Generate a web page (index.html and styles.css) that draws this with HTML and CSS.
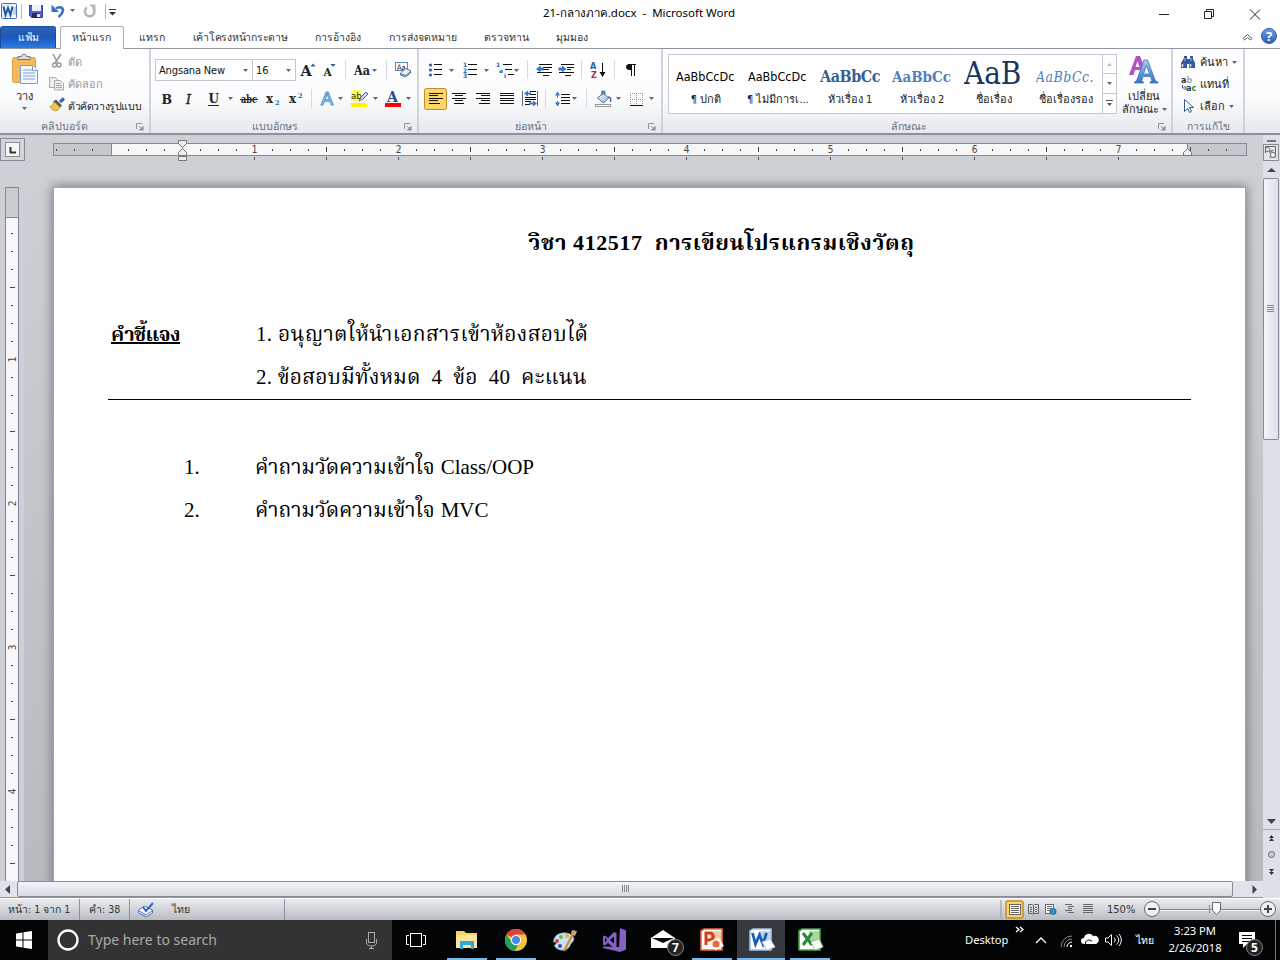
FILE: index.html
```html
<!DOCTYPE html>
<html lang="th">
<head>
<meta charset="utf-8">
<title>21-กลางภาค.docx - Microsoft Word</title>
<link rel="stylesheet" href="styles.css">
</head>
<body>
<svg class="defs" width="0" height="0">
  <defs>
    <linearGradient id="blueA" x1="0" y1="0" x2="0" y2="1"><stop offset="0" stop-color="#a9cdf5"/><stop offset="1" stop-color="#2f6dc6"/></linearGradient>
    <linearGradient id="steel" x1="0" y1="0" x2="1" y2="1"><stop offset="0" stop-color="#fff"/><stop offset="1" stop-color="#8fb0d8"/></linearGradient>
    <linearGradient id="help" x1="0" y1="0" x2="0" y2="1"><stop offset="0" stop-color="#6ea0e6"/><stop offset="1" stop-color="#2a5fb9"/></linearGradient>
    <symbol id="down" viewBox="0 0 5 3"><path d="M0 0h5L2.500 3z" fill="#666" stroke="none"/></symbol>
    <symbol id="launch" viewBox="0 0 8 8"><path d="M.5 6V.5H6M3 3l3 3" fill="none" stroke="#8a9099"/><path d="M7.500 2.500v5h-5z" fill="#8a9099"/></symbol>
  </defs>
</svg>

<header class="titlebar">
  <svg width="120" height="25" viewBox="0 0 120 25">
    <rect x="1.500" y="3.500" width="15" height="15" rx="1" fill="#e4effb" stroke="#3b74b8"/>
    <path d="M12 5h4v13h-4z" fill="#fff"/><path d="M13 8h3M13 10h3M13 12h3M13 14h3" stroke="#7ca8d8"/>
    <path d="M3.500 6.500l2 8.500 2.500-7 2.500 7 2-8.500" fill="none" stroke="#1c59a8" stroke-width="2"/>
    <path d="M21.500 4v15M105.500 4v15" stroke="#b4b8bd"/>
    <path d="M29.500 5.500h13v12h-11l-2-2z" fill="#5660d0" stroke="#333ea0"/><rect x="32" y="5" width="9" height="6" fill="#eaf0ff"/><rect x="32" y="13" width="8" height="5" fill="#222c60"/><rect x="37" y="14" width="3" height="3" fill="#dfe6fa"/>
    <path d="M56 8.500c5-3 8 0 6.500 3.500-.8 2-2 3.500-4 5" fill="none" stroke="#3f6fc4" stroke-width="2.600"/><path d="M51.500 4.500v7.500h7.500z" fill="#3f6fc4"/>
    <use href="#down" x="70" y="9" width="5" height="3"/>
    <path d="M87 7.500a4.800 4.800 0 1 0 6 .5" fill="none" stroke="#b5b5b5" stroke-width="2.600"/><path d="M89 4.500h6.500v6z" fill="#b9b9b9"/>
    <path d="M109 9.500h7" stroke="#333"/><path d="M109 12h7l-3.500 3.500z" fill="#333"/>
  </svg>
  <div class="doc-title">21-กลางภาค.docx&nbsp; -&nbsp; Microsoft Word</div>
  <svg width="130" height="25" viewBox="1150 0 130 25" fill="none" stroke="#222">
    <path d="M1159 14.500h10M1204.500 11.500h7v7h-7zM1206.500 11v-1.500h7v7h-2M1250 9.500l10 10M1260 9.500l-10 10"/>
  </svg>
</header>

<nav class="tabs">
  <div class="tab file">แฟ้ม</div>
  <div class="tab active">หน้าแรก</div>
  <div class="tab t-insert">แทรก</div>
  <div class="tab t-layout">เค้าโครงหน้ากระดาษ</div>
  <div class="tab t-ref">การอ้างอิง</div>
  <div class="tab t-mail">การส่งจดหมาย</div>
  <div class="tab t-review">ตรวจทาน</div>
  <div class="tab t-view">มุมมอง</div>
  <svg class="tab-end" width="45" height="23" viewBox="1235 25 45 23">
    <path d="M1243 38.500l4.500-4 4.500 4-1.500 1.500-3-2.500-3 2.500z" fill="#fff" stroke="#555"/>
    <circle cx="1269" cy="36" r="7.500" fill="url(#help)" stroke="#2a5bae"/>
    <text x="1269" y="41" class="help-mark">?</text>
  </svg>
</nav>

<section class="ribbon">
  <div class="group g-clip">
    <div class="g-body">
      <div class="paste">
        <svg width="48" height="39" viewBox="0 50 48 39">
          <rect x="12.500" y="57.500" width="23" height="25" rx="2" fill="#f0b95c" stroke="#d9a04a"/>
          <path d="M18 59.500v-3h3.500c0-3 5-3 5 0H30v3z" fill="#d8d8d8" stroke="#777"/>
          <path d="M20.500 65.500h12l5 5v13h-17z" fill="#f4f8ff" stroke="#7c9cc8"/><path d="M23 70h9M23 73h12M23 76h12M23 79h12" stroke="#7f9fce"/><path d="M32.500 65.500v5h5" fill="#fff" stroke="#7c9cc8"/>
        </svg>
        <span>วาง</span>
        <svg class="paste-ar" width="5" height="3"><use href="#down"/></svg>
      </div>
      <div class="clip-list">
        <div class="off"><svg width="18" height="18" viewBox="48 54 18 18"><path d="M53 55l4.500 8.500M61 55l-6 9" stroke="#9a9a9a" stroke-width="1.600"/><g fill="none" stroke="#999" stroke-width="1.400"><circle cx="54.500" cy="66" r="2"/><circle cx="59" cy="66" r="2"/></g></svg><span>ตัด</span></div>
        <div class="off"><svg width="18" height="18" viewBox="48 75 18 18" fill="#eee" stroke="#aaa"><path d="M49.500 77.500h6l2 2v8h-8z"/><path d="M54.500 80.500h6l3 3v6.500h-9zM56 83.500h5M56 85.500h6M56 87.500h6"/></svg><span>คัดลอก</span></div>
        <div><svg width="18" height="18" viewBox="48 97 18 18"><path d="M60 102l4-3.500" stroke="#3a5fa8" stroke-width="3"/><path d="M56 99.500l6 6-2 2-7-6z" fill="#555a60"/><path d="M54 101.500l6 6c-2 4-6 5-10-1 2 0 3-2 4-5z" fill="#f3c64b" stroke="#a07a1d" stroke-width=".7"/></svg><span class="w-brush">ตัวคัดวางรูปแบบ</span></div>
      </div>
    </div>
    <div class="g-cap">คลิปบอร์ด<svg class="lch" width="8" height="8"><use href="#launch"/></svg></div>
  </div>

  <div class="group g-font">
    <div class="row r1">
      <div class="combo c-name"><span>Angsana New</span><svg width="5" height="3"><use href="#down"/></svg></div>
      <div class="combo c-size"><span>16</span><svg width="5" height="3"><use href="#down"/></svg></div>
      <svg width="120" height="22" viewBox="296 59 120 22" class="ico-serif">
        <text x="300.500" y="76" font-size="14.500">A</text><path d="M310.500 66.500l2.500-3 2.500 3z" fill="#2e5f9e"/>
        <text x="323.500" y="76" font-size="10.500">A</text><path d="M330.500 64h5l-2.500 3z" fill="#2e5f9e"/>
        <path d="M345.500 60v19M386.500 60v19" stroke="#d5d8dc"/>
        <text x="354" y="75" font-size="12.500" textLength="16" lengthAdjust="spacingAndGlyphs">Aa</text><use href="#down" x="372" y="69" width="5" height="3"/>
        <rect x="395.500" y="62.500" width="12" height="8" fill="#fff" stroke="#5d86b6"/><text x="397" y="70" font-size="7.500" class="sans">Aa</text>
        <path d="M400.500 73l5-4.500 5 2v2.500l-5 4-5-2z" fill="#e8f0fb" stroke="#4a6f9f"/><path d="M401 74l5 1.500 4.500-4" fill="none" stroke="#4a6f9f"/>
      </svg>
    </div>
    <div class="row r2">
      <svg width="262" height="22" viewBox="154 88 262 22" class="ico-serif">
        <text x="161.500" y="103.500" font-size="12.500">B</text><text x="186" y="103.500" font-size="12.500" class="it">I</text><text x="208.500" y="102.500" font-size="12">U</text><path d="M208 105.500h11" stroke="#222"/>
        <use href="#down" x="228" y="97" width="5" height="3"/>
        <text x="241" y="103" font-size="10.500" textLength="16" lengthAdjust="spacingAndGlyphs">abc</text><path d="M240 99.500h18" stroke="#222"/>
        <text x="266" y="103" font-size="12">x</text><text x="275" y="105" font-size="6.500" class="blue">2</text>
        <text x="289" y="103" font-size="12">x</text><text x="298" y="98" font-size="6.500" class="blue">2</text>
        <path d="M311.500 89v19" stroke="#d5d8dc"/>
        <text x="321" y="105" font-size="18" class="glow">A</text><use href="#down" x="338" y="97" width="5" height="3"/>
        <path d="M351 90h10v11h-10z" fill="#ff6"/><text x="351" y="98.500" font-size="9.500" class="sans">ab</text><path d="M359 101l2-4 5-5 2 2-5 5z" fill="#c6d6ee" stroke="#4d6a96"/><path d="M351 103h16v4h-16z" fill="#fff200"/>
        <use href="#down" x="373" y="97" width="5" height="3"/>
        <text x="387" y="102" font-size="14" class="darkblue">A</text><path d="M385 103h16v4h-16z" fill="#f00"/>
        <use href="#down" x="406" y="97" width="5" height="3"/>
      </svg>
    </div>
    <div class="g-cap">แบบอักษร<svg class="lch" width="8" height="8"><use href="#launch"/></svg></div>
  </div>

  <div class="group g-para">
    <div class="row r1">
      <svg width="236" height="22" viewBox="422 59 236 22" fill="none" stroke="#111">
        <g fill="#2e5fa8" stroke="none"><circle cx="430.500" cy="65" r="1.600"/><circle cx="430.500" cy="70" r="1.600"/><circle cx="430.500" cy="75" r="1.600"/></g>
        <path d="M434 64.500h8M434 69.500h8M434 74.500h8M468 64.500h9M468 69.500h9M468 74.500h9M503 64.500h9M505 69.500h7M508 74.500h6"/>
        <g class="tiny"><text x="463" y="67">1</text><text x="463" y="72.500">2</text><text x="463" y="78">3</text><text x="496" y="67">1</text><text x="499" y="73">a</text><text x="504" y="78">i</text></g>
        <use href="#down" x="449" y="69" width="5" height="3"/><use href="#down" x="484" y="69" width="5" height="3"/><use href="#down" x="514" y="69" width="5" height="3"/>
        <path d="M527.500 60v19M581.500 60v19M614.500 60v19" stroke="#d5d8dc"/>
        <path d="M539 64.500h13M543 67.500h9M543 69.500h6M537 72.500h15M543 75.500h6M561 64.500h13M567 67.500h7M567 69.500h4M559 72.500h15M565 75.500h6"/>
        <path d="M536 69l4.500-3.500v2h3v3h-3v2zM566.500 69l-4.500-3.500v2h-3.500v3h3.500v2z" fill="#3d73c8" stroke="none"/>
        <text x="590" y="69" class="sortA">A</text><text x="591" y="77.500" class="sortZ">Z</text><path d="M602.500 63v11"/><path d="M599.500 72h6l-3 5z" fill="#111" stroke="none"/>
        <path d="M631.500 64v12M634.500 64v12M629 64.500h7"/><path d="M631 64.500h-2a2.500 2.500 0 0 0 0 5h2z" fill="#111"/>
      </svg>
    </div>
    <div class="row r2">
      <svg width="236" height="24" viewBox="422 87 236 24" fill="none" stroke="#111">
        <rect x="424.500" y="88.500" width="22" height="21" rx="2" fill="#fbd668" stroke="#c28a30"/>
        <path d="M429 93.500h14M429 95.500h9M429 98.500h14M429 100.500h9M429 103.500h11M452 93.500h14M455 95.500h8M452 98.500h14M455 100.500h8M454 103.500h10M476 93.500h14M481 95.500h9M476 98.500h14M481 100.500h9M479 103.500h11M500 93.500h14M500 95.500h14M500 98.500h14M500 100.500h14M500 103.500h14"/>
        <path d="M522.500 91v15M537.500 91v15" stroke="#668"/><path d="M530 91.500h6M530 94.500h6M525 97.500h11M525 99.500h11M525 101.500h6M525 104.500h5"/><path d="M524 93.500l4-3v2h3v2h-3v2zM537 103.500l-4-3v2h-4v2h4v2z" fill="#3d73c8" stroke="none"/>
        <path d="M545.500 89v19M586.500 89v19" stroke="#d5d8dc"/>
        <path d="M561 94.500h9M561 97.500h9M561 100.500h9M561 103.500h9"/><path d="M557.500 94v12" stroke="#3d73c8" stroke-dasharray="4 3"/><path d="M555 95.500l2.500-4 2.500 4zM555 102.500l2.500 4 2.500-4z" fill="#3d73c8" stroke="none"/>
        <use href="#down" x="572" y="97" width="5" height="3"/>
        <path d="M597.500 98l6-5 5 5-5 5z" fill="url(#steel)" stroke="#4b6a96"/><path d="M602 95v-3.500h2.500V95M608 97c3 0 3 2 2.500 5" stroke="#4b6a96" stroke-width="1.500"/><rect x="595.500" y="104.500" width="15" height="2" fill="#fff" stroke="#999"/>
        <use href="#down" x="616" y="97" width="5" height="3"/>
        <path d="M630.500 93v12M642.500 93v12M636.500 93v12M630 93.500h13M630 99.500h13" stroke="#999" stroke-dasharray="1 1"/><path d="M630 105.500h13"/>
        <use href="#down" x="649" y="97" width="5" height="3"/>
      </svg>
    </div>
    <div class="g-cap">ย่อหน้า<svg class="lch" width="8" height="8"><use href="#launch"/></svg></div>
  </div>

  <div class="group g-style">
    <div class="g-body">
      <div class="gallery">
        <div class="style"><b class="s-norm">AaBbCcDc</b><span>¶ ปกติ</span></div>
        <div class="style"><b class="s-norm">AaBbCcDc</b><span>¶ ไม่มีการเ...</span></div>
        <div class="style"><b class="s-h1">AaBbCc</b><span>หัวเรื่อง 1</span></div>
        <div class="style"><b class="s-h2">AaBbCc</b><span>หัวเรื่อง 2</span></div>
        <div class="style"><b class="s-title">AaB</b><span>ชื่อเรื่อง</span></div>
        <div class="style"><b class="s-sub">AaBbCc.</b><span>ชื่อเรื่องรอง</span></div>
        <div class="gal-nav">
          <div><svg width="5" height="3" viewBox="0 0 5 3"><path d="M0 3h5L2.500 0z" fill="#bbb"/></svg></div>
          <div><svg width="5" height="3"><use href="#down"/></svg></div>
          <div><svg width="7" height="7"><path d="M0 .5h7" stroke="#555"/><path d="M1 3h5L3.500 6z" fill="#555"/></svg></div>
        </div>
      </div>
      <div class="change">
        <svg width="36" height="32" viewBox="1126 53 36 32">
          <path d="M1129 75l7-19h4l5 13-3 5-2-4h-5l-1.500 5zM1135.500 67h4l-2-6z" fill="#b052c0" fill-rule="evenodd"/>
          <path d="M1134.500 83v-1l2-1 7.500-21h3.500l8 21 2.500 1v1h-8v-1l2-1-1.500-4.500h-7.500l-1.500 4.500 2 1v1zM1143.500 74h6l-3-8.500z" fill="url(#blueA)" stroke="#3b74c4" stroke-width=".8" fill-rule="evenodd"/>
        </svg>
        <span>เปลี่ยน</span>
        <span>ลักษณะ <svg width="5" height="3"><use href="#down"/></svg></span>
      </div>
    </div>
    <div class="g-cap">ลักษณะ<svg class="lch" width="8" height="8"><use href="#launch"/></svg></div>
  </div>

  <div class="group g-edit">
    <div class="edit-list">
      <div><svg width="20" height="18" viewBox="1180 53 20 18"><path d="M1184 56h3v3h3v-3h3v3l2 4v5h-6v-4h-2v4h-6v-5l3-5z" fill="#33599a"/><path d="M1182.500 64v3M1190.500 64v3" stroke="#cfe0ff" stroke-width="1.500"/><path d="M1185 58v3M1191 58v3" stroke="#9db8e6"/></svg><span>ค้นหา</span><svg class="ar" width="5" height="3"><use href="#down"/></svg></div>
      <div><svg width="20" height="18" viewBox="1180 75 20 18"><text x="1181" y="83" class="rep">a<tspan class="pale">b</tspan></text><text x="1186" y="91" class="rep">a<tspan class="green">c</tspan></text><path d="M1182.500 85v3h3M1184.500 86l2 2-2 2" fill="none" stroke="#3660a8"/></svg><span>แทนที่</span></div>
      <div><svg width="20" height="18" viewBox="1180 97 20 18"><path d="M1184.500 99.500v12l3-3 2 4 2-1-2-4h4z" fill="#fff" stroke="#33599a"/></svg><span>เลือก</span><svg class="ar" width="5" height="3"><use href="#down"/></svg></div>
    </div>
    <div class="g-cap">การแก้ไข</div>
  </div>
</section>

<main class="workspace">
  <div class="hruler">
    <svg width="1262" height="31" viewBox="0 135 1262 31">
      <defs><pattern id="ht" x="111" y="143" width="144" height="13" patternUnits="userSpaceOnUse"><path d="M17 6h1v2h-1zM35 6h1v2h-1zM53 6h1v2h-1zM71 4h1v5h-1zM89 6h1v2h-1zM107 6h1v2h-1zM125 6h1v2h-1z" fill="#444"/></pattern>
      <pattern id="hb" x="110" y="157" width="72" height="3" patternUnits="userSpaceOnUse"><path d="M0 0h1v3h-1z" fill="#555"/></pattern></defs>
      <rect x=".5" y="138.500" width="24" height="22" fill="#d2d6db" stroke="#858b95"/><rect x="5.500" y="142.500" width="14" height="14" fill="#f7f7f7" stroke="#858b95"/><path d="M10.500 147v6M10 152.500h6" stroke="#333" stroke-width="2"/>
      <rect x="53.500" y="143.500" width="1193" height="12" fill="#c5c9ce" stroke="#858b95"/>
      <rect x="111.500" y="143.500" width="1076" height="12" fill="#f7f7f7" stroke="#858b95"/>
      <rect x="54" y="143" width="1180" height="13" fill="url(#ht)"/><rect x="182" y="157" width="1000" height="3" fill="url(#hb)"/>
      <g class="rnum"><text x="254.500" y="153">1</text><text x="398.500" y="153">2</text><text x="542.500" y="153">3</text><text x="686.500" y="153">4</text><text x="830.500" y="153">5</text><text x="974.500" y="153">6</text><text x="1118.500" y="153">7</text></g>
      <g fill="#eee" stroke="#777"><path d="M178.500 140.500h8v3l-4 4-4-4zM178.500 155.500v-3l4-4 4 4v3zM178.500 156.500h8v4h-8zM1183.500 155.500v-3l4-4 4 4v3z"/></g>
    </svg>
  </div>
  <div class="middle">
    <div class="vruler">
      <svg width="24" height="715" viewBox="0 166 24 715">
        <defs><pattern id="vt" x="6" y="215" width="13" height="144" patternUnits="userSpaceOnUse"><path d="M5 18h2v1h-2zM5 36h2v1h-2zM5 54h2v1h-2zM4 72h5v1h-5zM5 90h2v1h-2zM5 108h2v1h-2zM5 126h2v1h-2z" fill="#444"/></pattern></defs>
        <rect x="5.500" y="187.500" width="13" height="720" fill="#c9cdd2" stroke="#7c8591"/><rect x="5.500" y="217.500" width="13" height="700" fill="#f7f7f9" stroke="#7c8591"/>
        <rect x="6" y="219" width="13" height="662" fill="url(#vt)"/>
        <g class="rnum"><text transform="translate(16 359.500) rotate(-90)">1</text><text transform="translate(16 503.500) rotate(-90)">2</text><text transform="translate(16 647.500) rotate(-90)">3</text><text transform="translate(16 791.500) rotate(-90)">4</text></g>
      </svg>
    </div>
    <div class="canvas">
      <article class="page">
        <h1><span class="fit-title">วิชา 412517&nbsp; การเขียนโปรแกรมเชิงวัตถุ</span></h1>
        <div class="line"><span class="lead"><b><u>คำชี้แจง</u></b></span><span class="fit-1">1. อนุญาตให้นำเอกสารเข้าห้องสอบได้</span></div>
        <div class="line last"><span class="lead"></span><span class="fit-2">2. ข้อสอบมีทั้งหมด&nbsp; 4&nbsp; ข้อ&nbsp; 40&nbsp; คะแนน</span></div>
        <div class="line q"><span class="num">1.</span><span class="fit-q">คำถามวัดความเข้าใจ</span> <span class="lat">Class/OOP</span></div>
        <div class="line q"><span class="num">2.</span><span class="fit-q">คำถามวัดความเข้าใจ</span> <span class="lat">MVC</span></div>
      </article>
    </div>
  </div>
  <div class="hscroll">
    <div class="sb-btn"><svg width="17" height="16"><path d="M5 8.500l5-4.500v9z" fill="#444"/></svg></div>
    <div class="thumb-h"><svg width="9" height="8"><path d="M1.500 0v7M3.500 0v7M5.500 0v7M7.500 0v7" stroke="#888"/></svg></div>
    <div class="sb-btn right"><svg width="30" height="16"><path d="M24 8.500L19.500 4v9z" fill="#444"/></svg></div>
  </div>
  <div class="vscroll">
    <svg width="17" height="43" viewBox="1263 135 17 43"><path d="M1267 140h9v2h-9z" fill="#777"/><rect x="1263.500" y="144.500" width="15" height="16" fill="#e3e6ea" stroke="#858b95"/><path d="M1265.500 153v-6.500h10V157h-6" fill="none" stroke="#666"/><path d="M1266 148l3 3.500 3-1.500M1269 153l5-3" stroke="#777" fill="none"/><circle cx="1267.500" cy="149.500" r="2" fill="#fff" stroke="#666"/><circle cx="1273" cy="155" r="2.500" fill="#fff" stroke="#666"/><path d="M1267 172l4.500-4 4.500 4z" fill="#444"/></svg>
    <div class="thumb-v"><svg width="8" height="8"><path d="M0 .5h7M0 2.500h7M0 4.500h7M0 6.500h7" stroke="#888"/></svg></div>
    <svg class="vs-end" width="17" height="84" viewBox="1263 814 17 84"><path d="M1267 819h9l-4.500 5z" fill="#444"/><path d="M1263 829.500h17" stroke="#a5abb3"/><path d="M1269 838l2.500-3 2.500 3zM1269 841l2.500-3 2.500 3zM1269 869l2.500 3 2.500-3zM1269 872l2.500 3 2.500-3z" fill="#333"/><circle cx="1271.500" cy="854.500" r="3" fill="#ccc" stroke="#666"/></svg>
  </div>
</main>

<footer class="status">
  <div class="st s1">หน้า: 1 จาก 1</div>
  <div class="st s2">คำ: 38</div>
  <div class="st s3"><svg width="18" height="16" viewBox="138 901 18 16"><path d="M138.500 909l6-4 8 4v3l-6 4-8-4z" fill="#f4f7ff" stroke="#4d71b5"/><path d="M139 910l7 4 6-4" fill="none" stroke="#4d71b5"/><path d="M143 906l3 4 7-8" fill="none" stroke="#3366c8" stroke-width="2"/></svg><span>ไทย</span></div>
  <div class="st-right">
    <svg width="100" height="21" viewBox="1000 899 100 21" fill="none" stroke="#666">
      <path d="M1001 900v18" stroke="#9095a0"/><rect x="1006" y="901" width="17" height="17" rx="2" fill="#fbd768" stroke="#c28a30" stroke-width="1.500"/>
      <rect x="1009.500" y="904.500" width="11" height="10" fill="#fff"/><path d="M1011 906.500h8M1011 908.500h8M1011 910.500h8M1011 912.500h8"/>
      <path d="M1028.500 904.500h4l1 1 1-1h4v9h-4l-1 1-1-1h-4zM1033.500 905v9M1030 907.500h2M1030 909.500h2M1030 911.500h2M1035 907.500h2M1035 909.500h2M1035 911.500h2"/>
      <rect x="1045.500" y="904.500" width="8" height="9" fill="#fff"/><path d="M1047 906.500h5M1047 908.500h5M1047 910.500h5"/><circle cx="1053" cy="911.500" r="3.500" fill="#2c77b5" stroke="none"/><path d="M1052 909l2 2-2 3" stroke="#6cc06c"/>
      <path d="M1065 904.500h7M1068 906.500h6M1068 908.500h4M1065 910.500h7M1068 912.500h6"/><path d="M1083 904.500h10M1083 906.500h10M1083 908.500h10M1083 910.500h10M1083 912.500h10"/>
    </svg>
    <span class="zoom">150%</span>
    <svg width="137" height="21" viewBox="1143 899 137 21">
      <path d="M1159 909.500h102" stroke="#7f8aa0"/><path d="M1159 910.500h102" stroke="#fff" opacity=".7"/><path d="M1209.500 905v8" stroke="#7f8aa0"/>
      <g fill="#eef0f3" stroke="#666"><circle cx="1152" cy="909" r="7.500"/><circle cx="1268" cy="909" r="7.500"/><path d="M1212.500 902.500h8v8l-4 4-4-4z" fill="#fff"/></g>
      <path d="M1148 909h8M1264 909h8M1268 905v8" stroke="#444" stroke-width="2"/>
    </svg>
  </div>
</footer>

<div class="taskbar">
  <svg width="48" height="40" viewBox="0 920 48 40"><path d="M16 933.500l6.500-1v7H16zM23.500 932.300l8.500-1.300v8.500h-8.500zM16 940.500h6.500v7l-6.500-1zM23.500 940.500h8.500v8.500l-8.500-1.300z" fill="#fff"/></svg>
  <div class="search">
    <svg width="40" height="40" viewBox="48 920 40 40"><circle cx="68" cy="940" r="9.500" fill="none" stroke="#fff" stroke-width="2.300"/></svg>
    <span>Type here to search</span>
    <svg class="mic" width="20" height="40" viewBox="362 920 20 40" fill="none" stroke="#aaa"><rect x="368.500" y="932.500" width="6" height="10"/><path d="M366.500 939v4c0 4 10 4 10 0v-4M371.500 946v2M369 948.500h5"/></svg>
  </div>
  <svg width="58" height="40" viewBox="392 920 58 40" fill="none" stroke="#fff"><rect x="410.500" y="933.500" width="11" height="13"/><path d="M409 935.500h-2.500v9h2.500M423 935.500h2.500v9H423"/></svg>
  <svg width="400" height="40" viewBox="442 920 400 40" class="apps">
    <path d="M737 920h48v40h-48z" fill="#35393d"/>
    <path d="M447 958h40v2h-40zM496 958h40v2h-40zM692 958h40v2h-40zM737 958h48v2h-48zM790 958h40v2h-40z" fill="#76b9ed"/>
    <path d="M456 931h8l2 2h11v15h-21z" fill="#f5d169"/><path d="M456 935h21v13h-21z" fill="#fde398"/><path d="M460 941h14v8h-3v-4h-8v4h-3z" fill="#2fa8e0"/>
    <circle cx="516" cy="940" r="11" fill="#f4c63d"/><path d="M516 940L506.500 934.500A11 11 0 0 1 525.500 934.500H516z" fill="#db4437"/><path d="M506.500 934.500a11 11 0 0 0 8 16.500l5-8-3.500-3-5 1z" fill="#1fa260"/><circle cx="516" cy="940" r="5.200" fill="#fff"/><circle cx="516" cy="940" r="4" fill="#4a86e8"/>
    <path d="M553.500 942c0-7 7-10 13-9 7 1 9 6 6 9-3 2-2 7-8 8-5 1-10-2-10-5 3-1 2-3-1-3z" fill="#c6e2f4" stroke="#6fa0c6" stroke-width=".7"/><circle cx="557" cy="941" r="2" fill="#dd4338"/><circle cx="561" cy="937" r="2" fill="#6cb645"/><circle cx="567" cy="936" r="2" fill="#eab12b"/><circle cx="560" cy="946" r="2" fill="#334d9c"/><path d="M564 951l9-17" stroke="#d98530" stroke-width="2.200"/><path d="M571 934l1-4 5 1-2 5z" fill="#c9a270"/>
    <path d="M620 928l6 2.500v19l-6 2.500-17-4v-1.500l16 .5z" fill="#8661c5"/><path d="M614 932l2.500 1v14l-2.500 1-6-5-3 2.500-2-1v-8l2-1 3 2.500zM605 937.500v5l2-2.500zM614 936.500l-4 3.500 4 3.500z" fill="#8661c5" fill-rule="evenodd"/>
    <path d="M651 938l12-8 12 8v10h-24z" fill="#fff"/><path d="M652 938h22l-11 5z" fill="#080a0c"/><circle cx="675.500" cy="947.500" r="8" fill="#222" stroke="#888"/><text x="675.500" y="952" class="badge">7</text>
    <g><path d="M701 931l3-2h18v21h-21z" fill="#fff" stroke="#e9663b" stroke-width="1.600"/><path d="M710 931h11v12h-11z" fill="#f9c7ad"/><path d="M706 945v-12h3.500c5 0 5 7 0 7h-3" fill="none" stroke="#d5401c" stroke-width="3"/><path d="M710 941l9-3 5 8-9 4z" fill="#fff"/><circle cx="716" cy="944" r="3.500" fill="#ea6a3d"/></g>
    <g><path d="M750 931l3-2h18v21h-21z" fill="#fff" stroke="#9fc3ec" stroke-width="1.600"/><path d="M760 931h10v12h-10z" fill="#b9d5f3"/><path d="M752.500 933l3 11 4-9 3.500 9 3.500-11" fill="none" stroke="#1c5cb4" stroke-width="2.800"/><path d="M762 942l8-3 5 8-8 3z" fill="#fff" stroke="#b5cdec"/></g>
    <g><path d="M799 931l3-2h18v21h-21z" fill="#fff" stroke="#46a047" stroke-width="1.600"/><path d="M809 931h10v12h-10z" fill="#a9d99b"/><path d="M803 933l9 12M812 933l-9 12" fill="none" stroke="#2b8a38" stroke-width="3"/><path d="M811 942l8-3 4 8-8 3z" fill="#fff" stroke="#9aca93"/></g>
  </svg>
  <div class="tray">
    <span class="desk">Desktop</span>
    <svg width="116" height="40" viewBox="1014 920 116 40" fill="none" stroke="#fff"><path d="M1018 927l3 2.500-3 2.500M1022 927l3 2.500-3 2.500" stroke-width="1.300"/><path d="M1038 943l5-5 5 5" stroke-width="1.300"/><path d="M1063 947a11 11 0 0 1 11-11M1066 947a8 8 0 0 1 8-8" stroke="#888"/><path d="M1069 947a5 5 0 0 1 5-5" stroke="#fff"/><circle cx="1073" cy="946" r="1.200" fill="#fff" stroke="none"/><path d="M1086 944a3 3 0 0 1 0-6 5 5 0 0 1 9-2 4 4 0 0 1 3 8z" fill="#fff" stroke="none"/><path d="M1087.500 944.500c-1-4 4-6 6.500-3" stroke="#000"/><path d="M1107.500 938v4h2.500l3.500 3.500v-11L1110 938zM1116 937.500c1.500 1.500 1.500 3.500 0 5M1118.500 935.500c3 3 3 6 0 9M1121 934c3 3.500 3 8.500 0 12"/></svg>
    <span class="lang">ไทย</span>
    <div class="clock"><span>3:23 PM</span><span>2/26/2018</span></div>
    <svg width="52" height="40" viewBox="1228 920 52 40"><path d="M1239 932h16v12h-8l-4 4v-4h-4z" fill="#fff"/><path d="M1242 935.500h10M1242 938.500h10M1242 941.500h7" stroke="#000"/><circle cx="1254.500" cy="947.500" r="8" fill="#222" stroke="#888"/><text x="1254.500" y="952" class="badge">5</text><path d="M1275.500 920v40" stroke="#777"/></svg>
  </div>
</div>
</body>
</html>
```
FILE: styles.css
```css
* { box-sizing: border-box; }
body { margin: 0; width: 1280px; height: 960px; overflow: hidden; display: flex; flex-direction: column; background: #fff; font: 11px "DejaVu Sans Condensed", "DejaVu Sans", "Noto Sans", sans-serif; color: #222; white-space: nowrap; }
svg { display: block; flex: none; }
.defs { position: absolute; }
.titlebar { height: 25px; display: flex; justify-content: space-between; }
.doc-title { font: 11.5px/25px "Noto Sans", sans-serif; color: #000; margin-left: 8px; width: 192px; flex: none; display: flex; justify-content: center; }
.tabs { height: 24px; display: flex; border-bottom: 1px solid #8e959e; padding-top: 1px; line-height: 23px; flex: none; font-size: 10.5px; }
.tab { flex: none; display: flex; justify-content: center; color: #333; }
.file { width: 56px; background: linear-gradient(#2d62b8, #1f56b0 45%, #1a60cc 60%, #2e7ae0); color: #fff; border: 1px solid #174f9e; border-bottom: 0; border-radius: 3px 3px 0 0; line-height: 21px; margin-right: 4px; }
.active { width: 64px; border: 1px solid #a9aeb6; border-bottom: 0; border-radius: 3px 3px 0 0; background: #fff; height: 23px; line-height: 21px; padding-right: 2px; }
.t-insert { width: 56px; }
.t-layout { width: 120px; letter-spacing: -.25px; }
.t-ref { width: 76px; }
.t-mail { width: 94px; }
.t-review { width: 72px; }
.t-view { width: 60px; }
.tab-end { margin-left: auto; margin-top: -1px; }
.help-mark { font: bold 13px "Noto Sans", sans-serif; fill: #fff; text-anchor: middle; }
.ribbon { height: 86px; flex: none; display: flex; background: linear-gradient(#fff, #fbfcfd 55%, #e6e9ed); border-bottom: 2px solid #8b929c; }
.group { display: flex; flex-direction: column; border-right: 2px solid #d0d4da; height: 84px; flex: none; }
.g-clip { width: 151px; }
.g-font { width: 268px; padding-left: 3px; }
.g-para { width: 244px; padding-left: 3px; }
.g-style { width: 510px; padding-left: 5px; }
.g-edit { width: 72px; padding-left: 7px; }
.g-body { display: flex; }
.g-cap { height: 15px; line-height: 17px; margin-top: auto; padding-right: 21px; color: #667085; display: flex; justify-content: center; position: relative; font-size: 10.7px; }
.g-edit .g-cap { padding-right: 6px; font-size: 10.3px; }
.lch { position: absolute; right: 5px; top: 5px; }
.paste { width: 48px; display: flex; flex-direction: column; align-items: center; line-height: 16px; padding-top: 1px; }
.paste-ar { margin-top: 2px; }
.clip-list { padding-top: 2px; }
.clip-list > div { display: flex; align-items: center; height: 22px; gap: 2px; }
.w-brush { font-size: 10.5px; letter-spacing: -.4px; }
.off { color: #999; }
.row { display: flex; flex: none; }
.r1 { height: 22px; margin-top: 10px; }
.r2 { height: 24px; margin-top: 6px; }
.g-font .r2 { padding-top: 1px; }
.combo { height: 22px; border: 1px solid #c4c8ce; background: #fff; display: flex; align-items: center; justify-content: space-between; padding: 0 4px 0 3px; color: #111; letter-spacing: -.15px; }
.c-name { width: 98px; margin-left: 1px; }
.c-size { width: 44px; margin-left: -1px; }
.ico-serif { font-family: "DejaVu Serif", serif; font-weight: bold; fill: #222; }
.ico-serif .it { font-style: italic; font-weight: normal; stroke: #222; stroke-width: .4; }
.ico-serif .sans { font-family: "DejaVu Sans Condensed", sans-serif; font-weight: normal; }
.ico-serif .blue { fill: #2e5fa8; }
.ico-serif .darkblue { fill: #2a4d8c; }
.ico-serif .glow { font-family: "Liberation Sans", sans-serif; font-weight: normal; fill: #fff; stroke: #5b9bd5; stroke-width: 1.2; }
.tiny { font: bold 6px "DejaVu Sans", sans-serif; fill: #2e5fa8; stroke: none; }
.sortA { font: bold 9px "DejaVu Sans Condensed", sans-serif; fill: #2e5fa8; stroke: none; }
.sortZ { font: bold 9px "DejaVu Sans Condensed", sans-serif; fill: #a33; stroke: none; }
.gallery { width: 449px; height: 60px; margin-top: 5px; border: 1px solid #c6cad0; background: #fff; display: flex; flex: none; padding-left: 1px; }
.style { width: 72px; flex: none; display: flex; flex-direction: column; align-items: center; padding: 0 6px; overflow: hidden; }
.style b { height: 36px; width: 60px; overflow: hidden; display: flex; align-items: center; padding-top: 7px; font-weight: normal; color: #000; flex: none; }
.style span { line-height: 18px; }
.style .s-norm { font-size: 12.5px; }
.style .s-h1 { font: bold 16px "DejaVu Serif Condensed", "DejaVu Serif", serif; color: #365f91; letter-spacing: -.5px; }
.style .s-h2 { font: bold 15px "DejaVu Serif Condensed", "DejaVu Serif", serif; color: #4f81bd; }
.style .s-title { font: 31px/36px "DejaVu Serif Condensed", serif; color: #17365d; padding: 0; }
.style .s-sub { font: italic 14px "DejaVu Serif Condensed", serif; color: #4f81bd; letter-spacing: .5px; }
.gal-nav { width: 14px; margin-left: auto; display: grid; grid-template-rows: 1fr 1fr 1fr; border-left: 1px solid #c6cad0; }
.gal-nav div { display: flex; align-items: center; justify-content: center; border-bottom: 1px solid #c6cad0; }
.gal-nav div:last-child { border: 0; }
.change { width: 54px; display: flex; flex-direction: column; align-items: center; padding-top: 4px; line-height: 13px; }
.change > svg { margin-bottom: 5px; }
.change span { display: flex; align-items: center; gap: 3px; }
.edit-list { padding-top: 2px; }
.edit-list > div { display: flex; align-items: center; height: 22px; }
.ar { margin-left: 4px; }
.rep { font: bold 9px "DejaVu Sans Condensed", sans-serif; fill: #333; }
.pale { fill: #aaa; }
.green { fill: #2a8a2a; }
.workspace { flex: 1; min-height: 0; display: grid; grid-template: 31px 715px 17px / 1263px 17px; background: #cdd1d5; }
.rnum { font: 10px "DejaVu Sans Condensed", sans-serif; fill: #444; text-anchor: middle; }
.hruler { grid-column: 1; }
.middle { grid-column: 1; grid-row: 2; display: flex; overflow: hidden; }
.canvas { width: 1239px; padding: 22px 0 0 30px; background: linear-gradient(#cdd1d5, #b7babe); overflow: hidden; }
.page { width: 1191px; height: 760px; background: #fff; box-shadow: 0 0 0 1px #a0a5ae, 0 0 10px 2px #777b82; padding: 33px 54px 0; font: 21px/43px "Liberation Serif", "Norasi", "Noto Serif Thai", serif; color: #000; }
h1 { margin: 0 4px 49px 148px; font-size: 22px; line-height: 43px; font-weight: bold; display: flex; justify-content: center; }
.fit-title { letter-spacing: .58px; }
.fit-1 { letter-spacing: .32px; }
.fit-2 { letter-spacing: .22px; }
.fit-q { font-size: 21px; letter-spacing: -.15px; }
.line { display: flex; height: 43px; padding-left: 3px; }
.line > span { flex: none; }
.lead { width: 145px; }
.lead b { font-size: 20px; letter-spacing: -.6px; }
.line.last { height: 44px; border-bottom: 1px solid #000; margin-bottom: 46px; }
.line.q { padding-left: 76px; }
.num { width: 71px; }
.lat { margin-left: 6px; }
.hscroll { grid-column: 1; grid-row: 3; display: flex; border-bottom: 1px solid #8e96a3; background: #dfe3ea; }
.thumb-h { flex: 1; border: 1px solid #858b98; border-radius: 2px; background: linear-gradient(#f2f5f9, #d7dbe3); display: flex; align-items: center; justify-content: center; }
.vscroll { grid-column: 2; grid-row: 1 / 4; display: flex; flex-direction: column; background: #dce0e7; }
.thumb-v { height: 262px; width: 16px; border: 1px solid #858b98; border-radius: 2px; background: linear-gradient(90deg, #f4f6fa, #dce0e7); display: flex; align-items: center; justify-content: center; }
.vs-end { margin-top: auto; }
.status { height: 22px; flex: none; display: flex; line-height: 21px; background: linear-gradient(#e9ebee, #d6d9dd 40%, #b9bdc3); border-top: 1px solid #fff; color: #333; font-size: 10.5px; }
.st { border-right: 1px solid #8d929c; flex: none; }
.s1 { width: 80px; padding-left: 8px; }
.s2 { width: 50px; padding-left: 9px; }
.s3 { width: 155px; display: flex; align-items: center; padding-left: 8px; gap: 16px; }
.st-right { margin-left: auto; display: flex; }
.zoom { width: 43px; padding-left: 7px; font-size: 11px; }
.taskbar { height: 40px; flex: none; display: flex; background: #020406; color: #fff; font-family: "Noto Sans", sans-serif; }
.search { width: 344px; background: #333; color: #aaa; font-size: 14px; line-height: 40px; display: flex; flex: none; }
.mic { margin-left: auto; margin-right: 10px; }
.apps { margin-left: -8px; }
.badge { font: bold 12px "Noto Sans", sans-serif; fill: #fff; text-anchor: middle; }
.tray { margin-left: auto; display: flex; line-height: 40px; font-size: 11.2px; }
.desk { width: 47px; }
.lang { width: 34px; padding-left: 8px; font-size: 10.5px; }
.clock { width: 66px; display: flex; flex-direction: column; align-items: center; line-height: 17px; padding-top: 2px; }
```
